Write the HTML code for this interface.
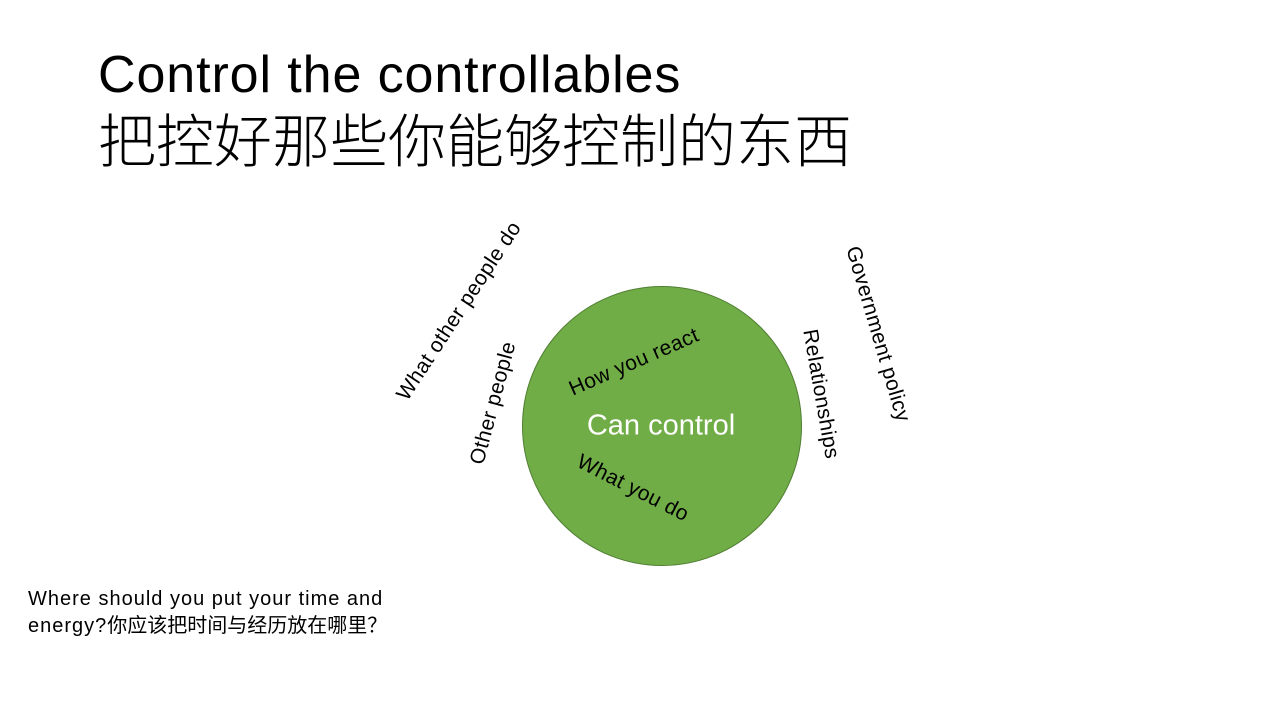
<!DOCTYPE html>
<html><head><meta charset="utf-8"><style>
html,body{margin:0;padding:0;background:#fff;}
body{width:1280px;height:720px;position:relative;overflow:hidden;font-family:"Liberation Sans","Noto Sans CJK SC",sans-serif;color:#000;}
.t{position:absolute;white-space:nowrap;line-height:1;}
.r{position:absolute;white-space:nowrap;line-height:1;font-size:21px;letter-spacing:0.4px;transform-origin:center;}
#circle{position:absolute;left:522px;top:286px;width:278px;height:278px;border-radius:50%;background:#70AD47;border:1px solid #507E32;}
</style></head><body>
<div class="t" style="left:98px;top:49px;font-size:52px;letter-spacing:0.9px;">Control the controllables</div>
<div class="t" style="left:98px;top:108px;font-size:58px;font-family:'Noto Sans CJK SC',sans-serif;font-weight:300;">把控好那些你能够控制的东西</div>
<div id="circle"></div>
<div class="r" style="left:459px;top:311px;transform:translate(-50%,-50%) rotate(-56.7deg);">What other people do</div>
<div class="r" style="left:493px;top:403px;transform:translate(-50%,-50%) rotate(-75deg);">Other people</div>
<div class="r" style="left:634px;top:362px;transform:translate(-50%,-50%) rotate(-23.6deg);">How you react</div>
<div class="r" style="left:633px;top:488px;transform:translate(-50%,-50%) rotate(27deg);">What you do</div>
<div class="r" style="left:821px;top:394px;transform:translate(-50%,-50%) rotate(80deg);">Relationships</div>
<div class="r" style="left:878px;top:334px;transform:translate(-50%,-50%) rotate(73.6deg);">Government policy</div>
<div class="r" style="left:661px;top:426px;font-size:29px;letter-spacing:0;color:#fff;transform:translate(-50%,-50%);">Can control</div>
<div class="t" style="left:28px;top:586px;font-size:20px;letter-spacing:1px;line-height:27px;white-space:normal;width:420px;">Where should you put your time and<br>energy?<span style="letter-spacing:0">你应该把时间与经历放在哪里？</span></div>
</body></html>
